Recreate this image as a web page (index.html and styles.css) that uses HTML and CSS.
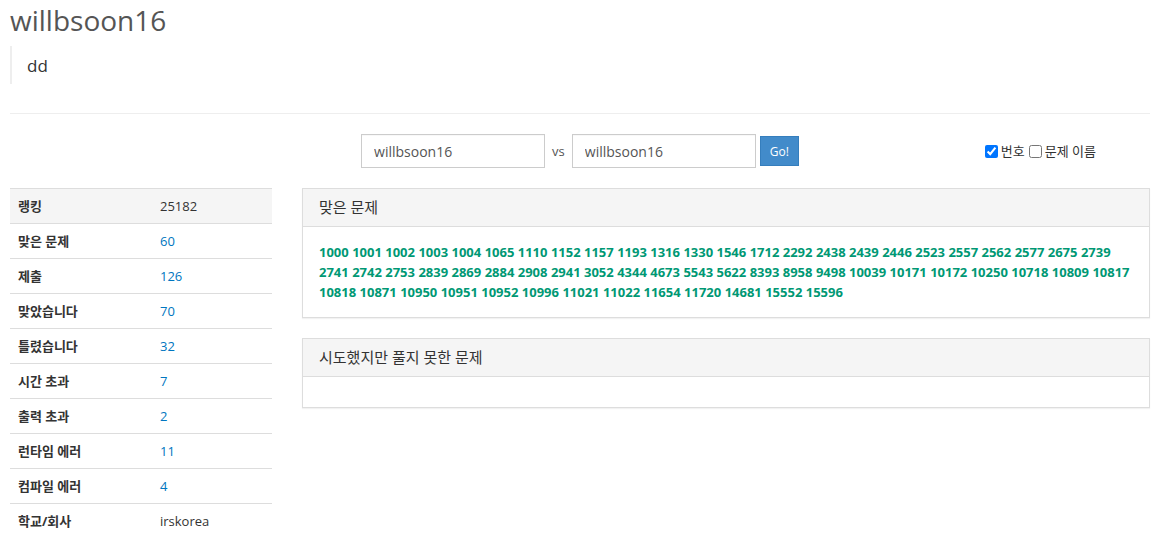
FILE: index.html
```html
<!DOCTYPE html>
<html lang="ko">

<head>
    <meta charset="UTF-8">
    <title>willbsoon16 정보</title>
    <link rel="stylesheet" href="styles.css">
</head>

<body>
    <div class="container">
        <div class="page-header">
            <h1>willbsoon16</h1>
            <blockquote class="no-mathjax">dd</blockquote>
        </div>

        <div class="vs-bar">
            <div></div>
            <form class="vs-form">
                <input type="text" class="form-control" value="willbsoon16">
                <span class="vs">vs</span>
                <input type="text" class="form-control" value="willbsoon16">
                <button type="button" class="btn-go">Go!</button>
            </form>
            <div class="show-options">
                <label><input type="checkbox" checked> 번호</label>
                <label><input type="checkbox"> 문제 이름</label>
            </div>
        </div>

        <div class="row">
            <div class="col-left">
                <table class="stat-table">
                    <tbody>
                        <tr class="first"><th>랭킹</th><td>25182</td></tr>
                        <tr><th>맞은 문제</th><td><a href="#">60</a></td></tr>
                        <tr><th>제출</th><td><a href="#">126</a></td></tr>
                        <tr><th>맞았습니다</th><td><a href="#">70</a></td></tr>
                        <tr><th>틀렸습니다</th><td><a href="#">32</a></td></tr>
                        <tr><th>시간 초과</th><td><a href="#">7</a></td></tr>
                        <tr><th>출력 초과</th><td><a href="#">2</a></td></tr>
                        <tr><th>런타임 에러</th><td><a href="#">11</a></td></tr>
                        <tr><th>컴파일 에러</th><td><a href="#">4</a></td></tr>
                        <tr><th>학교/회사</th><td>irskorea</td></tr>
                    </tbody>
                </table>
            </div>

            <div class="col-right">
                <div class="panel">
                    <div class="panel-heading">맞은 문제</div>
                    <div class="panel-body problem-list" id="solved"></div>
                </div>
                <div class="panel">
                    <div class="panel-heading">시도했지만 풀지 못한 문제</div>
                    <div class="panel-body problem-list"></div>
                </div>
            </div>
        </div>
    </div>

    <script>
        const solved = [1000, 1001, 1002, 1003, 1004, 1065, 1110, 1152, 1157, 1193, 1316, 1330, 1546, 1712,
            2292, 2438, 2439, 2446, 2523, 2557, 2562, 2577, 2675, 2739, 2741, 2742, 2753, 2839, 2869, 2884,
            2908, 2941, 3052, 4344, 4673, 5543, 5622, 8393, 8958, 9498, 10039, 10171, 10172, 10250, 10718,
            10809, 10817, 10818, 10871, 10950, 10951, 10952, 10996, 11021, 11022, 11654, 11720, 14681,
            15552, 15596];

        const list = document.getElementById('solved');
        solved.forEach(num => {
            const a = document.createElement('a');
            a.href = '#';
            a.className = 'result-ac';
            a.textContent = num;
            list.appendChild(a);
            list.appendChild(document.createTextNode(' '));
        });
    </script>
</body>

</html>
```

FILE: styles.css
```css
* {
    box-sizing: border-box;
}

body {
    margin: 0;
    font-family: "Open Sans", "Noto Sans CJK KR", sans-serif;
    font-size: 13px;
    line-height: 1.42857;
    color: #333;
    background-color: #fff;
}

a {
    color: #0076c0;
    text-decoration: none;
}

.container {
    padding: 0 8px 0 10px;
}

.page-header {
    padding-bottom: 14px;
    margin: 0 0 20px;
    border-bottom: 1px solid #eee;
}

.page-header h1 {
    margin: 0;
    padding-top: 2px;
    font-size: 28px;
    font-weight: 400;
    line-height: 36px;
    color: #555;
}

blockquote {
    margin: 8px 0 15px;
    padding: 7px 15px 6px;
    font-size: 17px;
    line-height: 25px;
    border-left: 2px solid #eee;
}

.vs-bar {
    display: grid;
    grid-template-columns: 1fr auto 1fr;
    align-items: center;
    margin-bottom: 20px;
}

.vs-form {
    display: flex;
    align-items: center;
}

.form-control {
    width: 184px;
    height: 34px;
    padding: 6px 12px;
    font-family: inherit;
    font-size: 14px;
    color: #555;
    border: 1px solid #ccc;
    border-radius: 0;
    box-shadow: inset 0 1px 1px rgba(0, 0, 0, 0.03);
}

.vs {
    padding: 0 7px;
    color: #555;
}

.btn-go {
    margin-left: 4px;
    height: 30px;
    padding: 0 9px;
    font-family: inherit;
    font-size: 12px;
    color: #fff;
    background-color: #428bca;
    border: 1px solid #357ebd;
    border-radius: 0;
}

.show-options {
    justify-self: end;
    margin-right: 54px;
    display: flex;
    gap: 4px;
    color: #333;
}

.show-options label {
    display: flex;
    align-items: center;
    gap: 3px;
}

.show-options input {
    margin: 0;
    width: 13px;
    height: 13px;
}

.row {
    display: flex;
    gap: 30px;
}

.col-left {
    width: 262px;
    flex-shrink: 0;
}

.col-right {
    flex-grow: 1;
}

.stat-table {
    width: 100%;
    border-collapse: collapse;
}

.stat-table th,
.stat-table td {
    height: 35px;
    padding: 0 8px;
    text-align: left;
    border-top: 1px solid #ddd;
}

.stat-table th {
    width: 142px;
    font-weight: 700;
}

.stat-table tr.first {
    background-color: #f5f5f5;
}

.panel {
    margin-bottom: 20px;
    border: 1px solid #ddd;
    box-shadow: 0 1px 1px rgba(0, 0, 0, 0.05);
}

.panel-heading {
    padding: 8px 16px;
    font-size: 15px;
    line-height: 21px;
    background-color: #f5f5f5;
    border-bottom: 1px solid #ddd;
}

.panel-body {
    padding: 15px 16px;
    min-height: 30px;
}

.problem-list {
    line-height: 20px;
}

.result-ac {
    color: #009874;
    font-weight: 700;
}
```
